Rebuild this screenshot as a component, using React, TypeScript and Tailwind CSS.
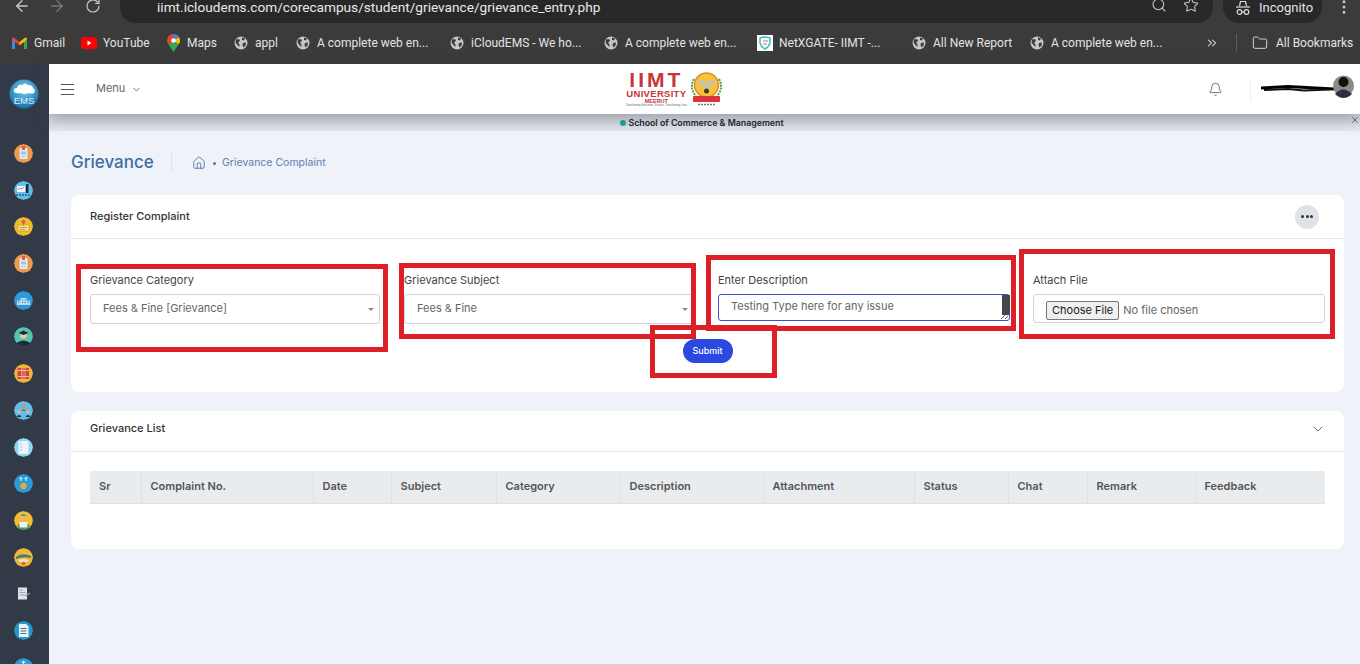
import React from 'react';
import { ArrowLeft, ArrowRight, Bell, ChevronDown, ChevronsRight, EllipsisVertical, Folder, Home, Menu, RotateCw, Search, Star, X } from 'lucide-react';

const Globe = () => (
  <svg width="14" height="14" viewBox="0 0 14 14" className="shrink-0">
    <circle cx="7" cy="7" r="6.5" fill="#c7c7c7" />
    <path d="M2 3.500 5 3l1 2-2 1.500 1.500 2V11L3 8.500 1.500 6.500ZM8 1.500l3 1-1 2-2-.5ZM9 7l3-.5-.5 3-2 2-1-2.500Z" fill="#3b3b3b" />
  </svg>
);

const Gmail = () => (
  <svg width="15" height="12" viewBox="0 0 15 12" className="shrink-0">
    <path d="M0 2v10h3V5l4.500 3.500V5L2 .8Q0 0 0 2Z" fill="#ea4335" />
    <path d="M15 2v10h-3V5L7.500 8.500V5L13 .8Q15 0 15 2Z" fill="#fbbc04" />
    <path d="M0 2v10h3V5Z" fill="#4285f4" />
    <path d="M15 2v10h-3V5Z" fill="#34a853" />
  </svg>
);

const YouTube = () => (
  <svg width="16" height="12" viewBox="0 0 16 12" className="shrink-0">
    <rect width="16" height="12" rx="3" fill="#f00" />
    <path d="M6.500 3.500v5l4-2.500Z" fill="#fff" />
  </svg>
);

const MapsPin = () => (
  <svg width="13" height="18" viewBox="0 0 13 18" className="shrink-0">
    <path d="M6.500 0A6.500 6.500 0 0 0 1.500 10.500L6.500 6.500Z" fill="#ea4335" />
    <path d="M6.500 0A6.500 6.500 0 0 1 12 3L6.500 6.500Z" fill="#4285f4" />
    <path d="M12 3a6.500 6.500 0 0 1-.5 7.500L6.500 6.500Z" fill="#fbbc04" />
    <path d="M1.500 10.500 6.500 6.500l5 4L6.500 18Z" fill="#34a853" />
    <circle cx="6.500" cy="6.500" r="2.300" fill="#fff" />
  </svg>
);

const NetXIcon = () => (
  <svg width="16" height="16" viewBox="0 0 16 16" className="shrink-0">
    <rect width="16" height="16" fill="#fff" />
    <path d="M3 3q5-2 10 0v5q-1 4-5 6-4-2-5-6Z" fill="none" stroke="#4fb8b8" strokeWidth="1.500" />
    <path d="M6 6h5M6 9h4" stroke="#8a8a8a" strokeWidth="1.200" />
  </svg>
);

const IncognitoIcon = () => (
  <svg width="16" height="16" viewBox="0 0 16 16" fill="none" stroke="#dcdcdc" strokeWidth="1.200" className="shrink-0">
    <path d="M4.500 6 5.500 1.500h5L11.500 6" />
    <path d="M1 7h14" />
    <circle cx="4.500" cy="12" r="2.300" />
    <circle cx="11.500" cy="12" r="2.300" />
    <path d="M6.800 12h2.400" />
  </svg>
);

const bookmarks = [
  { label: 'Gmail', icon: <Gmail />, w: 'w-[69px]', gap: 'gap-[7px]' },
  { label: 'YouTube', icon: <YouTube />, w: 'w-[86px]', gap: 'gap-[6px]' },
  { label: 'Maps', icon: <MapsPin />, w: 'w-[67px]', gap: 'gap-[7px]' },
  { label: 'appl', icon: <Globe />, w: 'w-[62px]', gap: 'gap-[7px]' },
  { label: 'A complete web en...', icon: <Globe />, w: 'w-[154px]', gap: 'gap-[7px]' },
  { label: 'iCloudEMS - We ho...', icon: <Globe />, w: 'w-[154px]', gap: 'gap-[7px]' },
  { label: 'A complete web en...', icon: <Globe />, w: 'w-[153px]', gap: 'gap-[7px]' },
  { label: 'NetXGATE- IIMT -...', icon: <NetXIcon />, w: 'w-[155px]', gap: 'gap-[6px]' },
  { label: 'All New Report', icon: <Globe />, w: 'w-[118px]', gap: 'gap-[7px]' },
  { label: 'A complete web en...', icon: <Globe />, w: 'w-[175px]', gap: 'gap-[7px]' },
];

const BrowserChrome = () => (
  <div className="shrink-0 font-['Roboto',sans-serif] text-[#e3e3e3]">
    <div className="h-[23px] bg-[#3b3b3b] flex items-start relative overflow-hidden">
      <div className="w-[120px] flex items-start pl-[13px] gap-[17px] pt-0">
        <ArrowLeft size={18} strokeWidth={1.800} color="#c7c7c7" className="-mt-[3px]" />
        <ArrowRight size={18} strokeWidth={1.800} color="#777" className="-mt-[3px]" />
        <RotateCw size={16} strokeWidth={1.800} color="#c7c7c7" className="-mt-[2px] ml-[2px]" />
      </div>
      <div className="w-[1093px] h-[23px] bg-[#282828] rounded-b-[16px] flex items-start pl-[37px] pr-[14px]">
        <span className="text-[13.650px] leading-[14px] text-[#e8e8e8]">iimt.icloudems.com/corecampus/student/grievance/grievance_entry.php</span>
        <div className="ml-auto flex items-start gap-[16px] -mt-[3px]">
          <Search size={16} strokeWidth={1.600} color="#c7c7c7" />
          <Star size={16} strokeWidth={1.600} color="#c7c7c7" />
        </div>
      </div>
      <div className="ml-[10px] w-[99px] h-[23px] bg-[#282828] rounded-b-[16px] flex items-start gap-[8px] pl-[12px]">
        <IncognitoIcon />
        <span className="text-[13px] leading-[15px]">Incognito</span>
      </div>
      <EllipsisVertical size={18} color="#c7c7c7" className="ml-[13px] -mt-[2px]" />
    </div>
    <div className="h-[41px] bg-[#3b3b3b] flex items-center pl-[12px] pb-[1px] text-[12px]">
      {bookmarks.map((b, i) => (
        <div key={i} className={`flex items-center shrink-0 ${b.w} ${b.gap}`}>
          {b.icon}
          <span className="whitespace-nowrap">{b.label}</span>
        </div>
      ))}
      <ChevronsRight size={14} color="#c7c7c7" className="shrink-0" />
      <div className="w-px h-[18px] bg-[#5c5c5c] ml-[17px]" />
      <Folder size={16} strokeWidth={1.500} color="#d0d0d0" className="ml-[15px] shrink-0" />
      <span className="ml-[8px] whitespace-nowrap">All Bookmarks</span>
    </div>
  </div>
);

// little round module icons in the rail, each with its own small drawing
const Badge = () => (
  <>
    <rect x="5.500" y="4" width="8" height="11" rx="1" fill="#dfeaf3" />
    <rect x="8" y="2" width="3" height="4" fill="#e2574c" />
    <rect x="7" y="7.500" width="5" height="3" fill="#9cc7e0" />
    <path d="M7 12.500h5" stroke="#9cc7e0" strokeWidth="0.800" />
  </>
);

const railIcons: { bg: string; art: React.ReactNode }[] = [
  { bg: '#ee9a4d', art: <Badge /> },
  {
    bg: '#62bfe8',
    art: (
      <>
        <rect x="3" y="5" width="8" height="6" fill="#eef6fb" />
        <path d="M4 9l2-2 2 1 2-2" stroke="#e2574c" strokeWidth="0.800" fill="none" />
        <rect x="12" y="3" width="2.500" height="9" fill="#1f2a38" />
        <path d="M2 14h15" stroke="#2a5f85" strokeWidth="1.500" strokeDasharray="2 1" />
      </>
    ),
  },
  {
    bg: '#edbb2e',
    art: (
      <>
        <rect x="4" y="8" width="11" height="6" fill="#f6e08e" stroke="#b98f20" strokeWidth="0.500" />
        <circle cx="9.500" cy="5" r="2" fill="#e2574c" />
        <path d="M9.500 6v3M6 10.500h7M6 12.500h5" stroke="#a9822a" strokeWidth="0.700" />
      </>
    ),
  },
  { bg: '#ee9a4d', art: <Badge /> },
  {
    bg: '#2a9bd8',
    art: (
      <>
        <path d="M6.500 14V7h6v7ZM3 14v-4.500h3.500V14ZM12.500 14V9.500H16V14Z" fill="#b9dcf2" />
        <path d="M8 9h1M10.500 9h1M8 11.500h1M10.500 11.500h1M4 11h1.500M13.500 11H15" stroke="#2d6fa5" strokeWidth="1" />
      </>
    ),
  },
  {
    bg: '#52c7ab',
    art: (
      <>
        <path d="M2.500 19V16q7-5 14 0v3Z" fill="#1f2a38" />
        <circle cx="9.500" cy="8.500" r="3.300" fill="#f0c6a0" />
        <path d="M4.500 6 9.500 3.500l5 2.500-5 2Z" fill="#1f2a38" />
      </>
    ),
  },
  {
    bg: '#f0b43a',
    art: (
      <>
        <rect x="3.500" y="4" width="3.500" height="11" fill="#c9474a" />
        <rect x="7.500" y="4" width="3.500" height="11" fill="#dc6a62" />
        <rect x="11.500" y="4" width="3.500" height="11" fill="#c9474a" />
        <path d="M3.500 6.500h11.500M3.500 12.500h11.500" stroke="#f3d9b0" strokeWidth="0.800" />
      </>
    ),
  },
  {
    bg: '#5fbfe9',
    art: (
      <>
        <circle cx="9.500" cy="5" r="2" fill="#e58a5c" />
        <path d="M7 10q2.500-3.500 5 0Z" fill="#c9474a" />
        <circle cx="5" cy="11" r="1.800" fill="#e8b48a" />
        <circle cx="14" cy="11" r="1.800" fill="#e8b48a" />
        <path d="M2.500 16q2.500-4 5 0ZM11.500 16q2.500-4 5 0Z" fill="#1f2a38" />
      </>
    ),
  },
  {
    bg: '#8ed5f3',
    art: (
      <>
        <rect x="4.500" y="3" width="10" height="13" rx="1" fill="#e9f6fc" />
        <path d="M6.500 6h1M6.500 9h1M6.500 12h1" stroke="#e2574c" strokeWidth="1" />
      </>
    ),
  },
  {
    bg: '#2a9bd8',
    art: (
      <>
        <circle cx="9.500" cy="12" r="3.300" fill="#e9a93a" />
        <path d="M7 7V3.500M5.500 5 7 3.500 8.500 5M12 7V3.500M10.500 5 12 3.500 13.500 5" stroke="#fff" strokeWidth="0.900" fill="none" />
      </>
    ),
  },
  {
    bg: '#f6bb32',
    art: (
      <>
        <circle cx="9.500" cy="6" r="3" fill="#e8b48a" />
        <path d="M6.500 5q3-4 6 0Z" fill="#4a9a68" />
        <path d="M3.500 19v-5q6-5 12 0v5Z" fill="#4a9a68" />
        <rect x="5.500" y="11" width="8" height="5.500" fill="#ecf3ea" />
      </>
    ),
  },
  {
    bg: '#efb53c',
    art: (
      <>
        <path d="M2 9q5-5 15-1v2q-8-2-15 1Z" fill="#3f7f6c" />
        <path d="M4 12q5-2 11 0l-2 2H6Z" fill="#f2e6c8" />
        <circle cx="9.500" cy="15.500" r="1.800" fill="#e2574c" />
      </>
    ),
  },
  {
    bg: '#333a47',
    art: (
      <>
        <rect x="4" y="3.500" width="9" height="12" fill="#dfe3ea" />
        <path d="M5.500 6h3M5.500 8.500h6M5.500 11h6" stroke="#8a93a0" strokeWidth="0.800" />
        <path d="M12 12l4-3" stroke="#8a93a0" strokeWidth="1.300" />
      </>
    ),
  },
  {
    bg: '#2299cf',
    art: (
      <>
        <path d="M5 3h7l2.500 2.500V16H5Z" fill="#eef4f8" />
        <path d="M6.500 7.500h6M6.500 10h6M6.500 12.500h6" stroke="#2d5d80" strokeWidth="0.900" />
      </>
    ),
  },
  {
    bg: '#2a9bd8',
    art: <path d="M9.500 3v6M7.500 5l2-2 2 2" stroke="#fff" strokeWidth="1" fill="none" />,
  },
];

const RailIcon = ({ bg, art }: { bg: string; art: React.ReactNode }) => (
  <svg width="19" height="19" viewBox="0 0 19 19" className="shrink-0">
    <defs>
      <clipPath id="rail-clip">
        <circle cx="9.500" cy="9.500" r="9.500" />
      </clipPath>
    </defs>
    <g clipPath="url(#rail-clip)">
      <circle cx="9.500" cy="9.500" r="9.500" fill={bg} />
      {art}
    </g>
  </svg>
);

const Sidebar = () => (
  <aside className="w-[49px] shrink-0 bg-[#333a47] flex flex-col items-center overflow-hidden pt-[15px] pr-[2px]">
    <svg width="30" height="30" viewBox="0 0 30 30" className="shrink-0">
      <defs>
        <radialGradient id="ems" cx="50%" cy="35%" r="65%">
          <stop offset="0%" stopColor="#7fd0f0" />
          <stop offset="100%" stopColor="#0f6fa8" />
        </radialGradient>
      </defs>
      <circle cx="15" cy="15" r="14.500" fill="url(#ems)" />
      <path d="M5 13q-1-4 3-4 1-4 5-3 3-3 6 0 5 0 5 3 3 2 1 5-3 1-6 0-4 2-7 0-4 1-7-1Z" fill="#fff" />
      <text x="15" y="25" textAnchor="middle" fontSize="9.500" fill="#dff2fb" fontFamily="Liberation Sans, sans-serif">EMS</text>
    </svg>
    <div className="flex flex-col gap-[17.700px] mt-[35px]">
      {railIcons.map((r, i) => (
        <RailIcon key={i} {...r} />
      ))}
    </div>
  </aside>
);

const Emblem = () => (
  <svg width="33" height="36" viewBox="0 0 33 36" className="shrink-0">
    <path d="M4 8q-5 9 2 17M29 8q5 9-2 17" fill="none" stroke="#4e9e4e" strokeWidth="2" strokeDasharray="2 1" />
    <circle cx="16.500" cy="14" r="12" fill="#f4c33a" stroke="#e58a2a" strokeWidth="1.500" />
    <path d="M7 11q5-4 9 1 4-5 10-1-2 5-7 4l-2 7h-1l-2-7q-5 1-7-4Z" fill="#c9c2a8" />
    <circle cx="16.500" cy="20" r="2.500" fill="#3f3a26" />
    <rect x="3" y="25" width="27" height="6" rx="1" fill="#d8343a" />
    <path d="M8 33.500h17" stroke="#777" strokeWidth="1.500" strokeDasharray="2 1" />
  </svg>
);

const TopBar = () => (
  <header className="h-[50px] shrink-0 bg-white flex items-center relative z-10 shadow-[0_6px_14px_rgba(60,70,90,0.35)] pl-[10px] pr-[6px]">
    <Menu size={17} strokeWidth={1.500} color="#555" className="scale-x-110" />
    <span className="ml-[20px] text-[11px] leading-[13px] text-[#666] -mt-[1px]">Menu</span>
    <ChevronDown size={11} color="#666" className="ml-[6px]" />
    <div className="ml-[482px] flex items-center gap-[2px]">
      <div className="w-[64px] flex flex-col items-center font-['Liberation_Sans',sans-serif] text-[#c8343a] leading-none">
        <span className="text-[21px] font-bold tracking-[3px] leading-[19px]">IIMT</span>
        <span className="text-[9.500px] font-bold tracking-[0.3px] leading-[9px] whitespace-nowrap">UNIVERSITY</span>
        <span className="text-[5.500px] font-bold leading-[6px]">MEERUT</span>
        <span className="text-[2.600px] text-[#666] leading-[4px] whitespace-nowrap">Transforming Education, Science, Transforming Lives</span>
      </div>
      <Emblem />
    </div>
    <Bell size={15} strokeWidth={1.300} color="#555" className="ml-auto" />
    <div className="w-px h-[23px] bg-[#eeeeee] ml-[27px]" />
    <div className="ml-[9px] flex items-center relative w-[94px]">
      <svg width="76" height="10" viewBox="0 0 76 10" className="shrink-0">
        <path d="M1 4 28 2.500 74 5" stroke="#000" strokeWidth="3" fill="none" />
        <path d="M4 6l24-1 16 1.500 26-1" stroke="#111" strokeWidth="2" fill="none" />
      </svg>
      <svg width="21" height="24" viewBox="0 0 21 24" className="absolute right-0 top-[-10px]">
        <circle cx="10.500" cy="12" r="10.500" fill="#8b8b86" />
        <circle cx="10.500" cy="8" r="5" fill="#111" />
        <path d="M2 20q8-9 17 0-4 4-8.500 4T2 20Z" fill="#2a3140" />
      </svg>
    </div>
  </header>
);

const SelectBox = ({ value }: { value: string }) => (
  <div className="h-[30px] border border-[#ced4da] rounded-[3px] flex items-center pl-[12px] pr-[5px] text-[11px] text-[#666] bg-white">
    <span className="-mt-[2px]">{value}</span>
    <span className="ml-auto w-0 h-0 border-x-[3px] border-x-transparent border-t-[3px] border-t-[#888]" />
  </div>
);

const FieldLabel = ({ children }: { children: React.ReactNode }) => (
  <label className="block text-[11px] leading-[14px] text-[#444] mb-[7px]">{children}</label>
);

const RegisterCard = () => (
  <section className="bg-white rounded-[8px] h-[197px]">
    <div className="h-[44px] border-b border-[#e2e5ea] flex items-center justify-between pl-[19px] pr-[25px]">
      <h3 className="text-[11px] leading-[14px] font-medium text-[#333] -mt-[2px]">Register Complaint</h3>
      <button className="w-[24px] h-[24px] rounded-full bg-[#dfe3e8] flex items-center justify-center gap-[1.500px]">
        <span className="w-[3px] h-[3px] rounded-full bg-[#333]" />
        <span className="w-[3px] h-[3px] rounded-full bg-[#333]" />
        <span className="w-[3px] h-[3px] rounded-full bg-[#333]" />
      </button>
    </div>
    <div className="px-[19px] pt-[34px]">
      <div className="grid grid-cols-[290px_290px_292px_291px] gap-x-[24px]">
        <div>
          <FieldLabel>Grievance Category</FieldLabel>
          <SelectBox value="Fees & Fine [Grievance]" />
        </div>
        <div>
          <FieldLabel>Grievance Subject</FieldLabel>
          <SelectBox value="Fees & Fine" />
        </div>
        <div className="relative">
          <FieldLabel>Enter Description</FieldLabel>
          <textarea
            defaultValue="Testing Type here for any issue"
            className="block w-full h-[27px] border-[1.500px] border-[#3f51c8] rounded-[3px] pl-[12px] pt-[4px] text-[11px] leading-[15px] text-[#666] bg-white outline-none"
          />
          <div className="absolute right-0 top-[22px] w-[8px] h-[20px] bg-[#46464e]" />
        </div>
        <div className="-ml-px">
          <FieldLabel>Attach File</FieldLabel>
          <input
            type="file"
            className="block w-full h-[29px] border border-[#ced4da] rounded-[3px] pl-[12px] pt-[6px] text-[11px] text-[#666] bg-white file:h-[19px] file:px-[5px] file:mr-[4px] file:text-[11px] file:text-[#222] file:bg-[#efefef] file:border file:border-[#767676] file:rounded-[2px]"
          />
        </div>
      </div>
      <div className="flex justify-center mt-[15px]">
        <button className="w-[50px] h-[24px] rounded-full bg-[#2b48e0] text-white text-[9px] font-medium">Submit</button>
      </div>
    </div>
  </section>
);

const columns = [
  { label: 'Sr', w: 'w-[51px]' },
  { label: 'Complaint No.', w: 'w-[172px]' },
  { label: 'Date', w: 'w-[78px]' },
  { label: 'Subject', w: 'w-[105px]' },
  { label: 'Category', w: 'w-[124px]' },
  { label: 'Description', w: 'w-[143px]' },
  { label: 'Attachment', w: 'w-[151px]' },
  { label: 'Status', w: 'w-[94px]' },
  { label: 'Chat', w: 'w-[79px]' },
  { label: 'Remark', w: 'w-[108px]' },
  { label: 'Feedback', w: 'w-[130px]' },
];

const ListCard = () => (
  <section className="bg-white rounded-[8px] h-[138px] mt-[19px]">
    <div className="h-[41px] border-b border-[#e2e5ea] flex items-center justify-between pl-[19px] pr-[18px] pb-[5px]">
      <h3 className="text-[11px] font-medium text-[#333]">Grievance List</h3>
      <ChevronDown size={16} strokeWidth={1.300} color="#555" />
    </div>
    <div className="px-[19px] pt-[19px]">
      <table className="w-full table-fixed border-collapse">
        <thead>
          <tr className="h-[32px] bg-[#e9ecef] border-b border-[#dee2e6]">
            {columns.map((c) => (
              <th key={c.label} className={`${c.w} text-left pl-[9px] pb-[2px] text-[11px] font-semibold text-[#555] border-r border-[#dee2e6] last:border-r-0`}>
                {c.label}
              </th>
            ))}
          </tr>
        </thead>
      </table>
    </div>
  </section>
);

// the red rectangles someone drew on top of the screenshot
const markups = [
  'left-[27px] top-[200px] w-[312px] h-[88px]',
  'left-[350px] top-[199px] w-[297px] h-[76px]',
  'left-[657px] top-[191px] w-[310px] h-[76px]',
  'left-[970px] top-[185px] w-[316px] h-[90px]',
  'left-[601px] top-[261px] w-[127px] h-[53px]',
];

export default function App() {
  return (
    <div className="w-[1360px] h-screen overflow-hidden flex flex-col font-['Inter',sans-serif] bg-[#f0f2fa]">
      <BrowserChrome />
      <div className="flex-1 flex min-h-0">
        <Sidebar />
        <div className="flex-1 flex flex-col min-w-0 relative">
          <TopBar />
          <div className="h-[17px] shrink-0 bg-gradient-to-b from-[#d3d6dc] to-[#e4e7ee] flex items-center justify-center relative pr-[5px]">
            <span className="w-[6px] h-[6px] rounded-full bg-[#1fa79b] mr-[2px]" />
            <span className="text-[8.800px] font-semibold text-[#222]">School of Commerce &amp; Management</span>
            <X size={10} color="#555" className="absolute right-0 top-[1px]" />
          </div>
          <div className="flex-1 px-[22px] min-h-0 pr-[16px]">
            <div className="h-[64px] flex items-center">
              <h1 className="text-[17px] leading-[20px] font-medium text-[#3f6f9f] w-[100px] -mt-[3px]">Grievance</h1>
              <div className="w-px h-[21px] bg-[#dde1e8] -mt-[1px]" />
              <Home size={14} strokeWidth={1.400} color="#3f6f9f" className="ml-[20px] -mt-[1px]" />
              <span className="w-[3px] h-[3px] rounded-full bg-[#4a78a4] ml-[7px]" />
              <span className="ml-[6px] text-[10.500px] leading-[12px] text-[#5b84ad] -mt-[1px]">Grievance Complaint</span>
            </div>
            <RegisterCard />
            <ListCard />
          </div>
          {markups.map((m) => (
            <div key={m} className={`absolute ${m} border-[5px] border-[#dd1f27] pointer-events-none`} />
          ))}
        </div>
      </div>
      <div className="h-px shrink-0 bg-[#d8d0bd]" />
    </div>
  );
}
